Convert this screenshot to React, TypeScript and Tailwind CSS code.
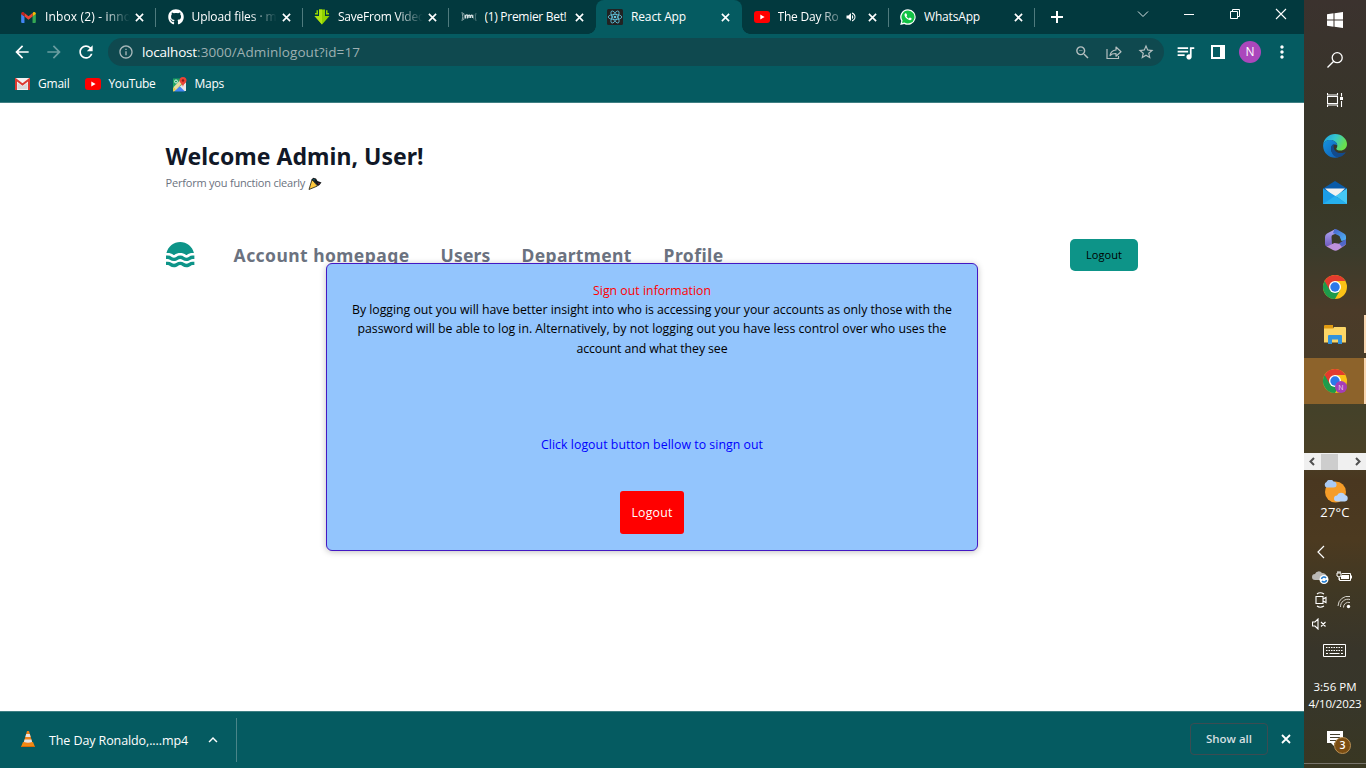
import { useLayoutEffect, useRef, useState, type ReactNode } from "react";
import { FaGithub } from "react-icons/fa";
import { MdQueueMusic, MdArrowBack, MdArrowForward, MdRefresh, MdStarBorder, MdZoomOut, MdInfoOutline, MdMoreVert, MdAdd, MdVolumeUp, MdKeyboardArrowUp } from "react-icons/md";

/* Single line of text whose tracking is adjusted so that it spans `w` pixels. */
function Line({ w, className = "", children }: { w: number; className?: string; children: ReactNode }) {
  const ref = useRef<HTMLSpanElement>(null);
  const [spacing, setSpacing] = useState(0);
  useLayoutEffect(() => {
    const el = ref.current;
    if (!el) return;
    const count = (el.textContent || "").length;
    setSpacing((w - el.getBoundingClientRect().width) / Math.max(count, 1));
  }, [w]);
  return (
    <span ref={ref} className={`inline-block whitespace-pre ${className}`} style={{ letterSpacing: spacing }}>
      {children}
    </span>
  );
}

function Cross({ className }: { className: string }) {
  return (
    <svg viewBox="0 0 10 10" className={`shrink-0 ${className}`} fill="none" stroke="#fff" strokeWidth="1.800">
      <path d="M1 1l8 8M9 1L1 9" />
    </svg>
  );
}

function GmailNew() {
  return (
    <svg viewBox="0 0 16 12" className="h-[11px] w-[15px]">
      <path d="M0 2v9a1 1 0 0 0 1 1h2.6V5L0 2z" fill="#4285f4" />
      <path d="M12.4 12H15a1 1 0 0 0 1-1V2l-3.6 3z" fill="#34a853" />
      <path d="M12.4 1.3V5L16 2.3V1.6C16 .2 14.300-.5 13.200.4z" fill="#fbbc04" />
      <path d="M3.600 5V1.200L8 4.500l4.400-3.300V5L8 8.400z" fill="#ea4335" />
      <path d="M0 1.600v.8L3.600 5V1.200L2.800.4C1.700-.5 0 .2 0 1.600z" fill="#c5221f" />
    </svg>
  );
}

function YouTube() {
  return (
    <svg viewBox="0 0 16 12" className="h-[12px] w-[16px]">
      <rect width="16" height="12" rx="3" fill="#f00" />
      <path d="M6.300 3.500v5L10.600 6z" fill="#fff" />
    </svg>
  );
}

function ReactIcon() {
  return (
    <svg viewBox="0 0 16 16" className="h-4 w-4">
      <rect width="16" height="16" rx="1.500" fill="#222" />
      <g fill="none" stroke="#61c5de" strokeWidth=".8">
        <ellipse cx="8" cy="8" rx="6.800" ry="2.600" />
        <ellipse cx="8" cy="8" rx="6.800" ry="2.600" transform="rotate(60 8 8)" />
        <ellipse cx="8" cy="8" rx="6.800" ry="2.600" transform="rotate(120 8 8)" />
      </g>
      <circle cx="8" cy="8" r="1.300" fill="#61c5de" />
    </svg>
  );
}

function SaveFrom() {
  return (
    <svg viewBox="0 0 16 16" className="h-4 w-4">
      <path d="M5 .5h6V7h4.500L8 15.500.5 7H5z" fill="#8fd100" />
      <path d="M5 .5h3v15L.5 7H5z" fill="#aee312" />
      <path d="M1 4h3v1.500H1zM12 4h3v1.500h-3zM2.500 1.200h1.500V4H2.500zM12 1.200h1.500V4H12z" fill="#8fd100" />
    </svg>
  );
}

function Premier() {
  return (
    <svg viewBox="0 0 16 12" className="h-3 w-4" fill="none" stroke="#d5e0e1" strokeWidth=".9">
      <path d="M1 1q1.500 5 0 9M2.500 2q2 3 0 7" opacity=".7" />
      <path d="M4.500 7.500V4.500q2-1.500 2 .5v2.500M7 7V5q1.500-1.500 2 0v2M9.500 7V5q1.500-1.500 2 0v2" strokeWidth="1.300" />
      <path d="M13 3.500q-1.500 2 0 5M15 2q-1.500 4 0 8" opacity=".4" />
    </svg>
  );
}

function WhatsAppIcon() {
  return (
    <svg viewBox="0 0 16 16" className="h-4 w-4">
      <path d="M8 .2A7.800 7.800 0 0 0 1.300 12L.2 15.900l4-1A7.800 7.800 0 1 0 8 .2z" fill="#fff" />
      <path d="M8 1.500A6.500 6.500 0 0 0 2.600 11.600L2 14l2.400-.6A6.500 6.500 0 1 0 8 1.500z" fill="#12c245" />
      <path d="M5.400 4.300c-1.700 1.100-.6 3.500 1 5s3.900 2.600 5 1.300c.7-1 .2-1.300-1.400-2-.6-.2-.8 1-1.300.9C7.800 9.100 6.700 8 6.500 7.200c0-.4.8-.6.5-1.300-.4-1-.6-1.800-1.600-1.600z" fill="#fff" />
    </svg>
  );
}

const FADE = "[mask-image:linear-gradient(to_right,black_68%,transparent_100%)]";

const TABS: { icon: ReactNode; title: string; w: number; fade?: boolean; active?: boolean; sound?: boolean; sep?: boolean }[] = [
  { icon: <GmailNew />, title: "Inbox (2) - inno", w: 86, fade: true, sep: true },
  { icon: <FaGithub size={16} color="#fff" />, title: "Upload files · m", w: 85, fade: true, sep: true },
  { icon: <SaveFrom />, title: "SaveFrom Video", w: 87, fade: true, sep: true },
  { icon: <Premier />, title: "(1) Premier Bet!", w: 82 },
  { icon: <ReactIcon />, title: "React App", w: 55, active: true },
  { icon: <YouTube />, title: "The Day Ro", w: 61, fade: true, sound: true, sep: true },
  { icon: <WhatsAppIcon />, title: "WhatsApp", w: 56, sep: true },
];

function TabStrip() {
  return (
    <div className="flex h-[34px] bg-[#02393e] pl-[9.500px]">
      {TABS.map((t) => (
        <div
          key={t.title}
          className={`relative flex h-[34px] w-[146.500px] shrink-0 items-center pl-[11.500px] ${t.active ? "rounded-t-[8px] bg-[#055b61]" : ""}`}
        >
          {t.active && (
            <>
              <span className="absolute bottom-0 -left-[8px] size-[8px] bg-[radial-gradient(circle_at_0_0,transparent_7.500px,#055b61_8px)]" />
              <span className="absolute -right-[8px] bottom-0 size-[8px] bg-[radial-gradient(circle_at_100%_0,transparent_7.500px,#055b61_8px)]" />
            </>
          )}
          <span className="flex w-[24px] shrink-0 items-center">{t.icon}</span>
          <span className={`w-[85px] shrink-0 overflow-hidden text-[12px] leading-[18px] text-white ${t.fade && !t.sound ? FADE : ""}`}>
            <span className={t.sound ? "inline-block [mask-image:linear-gradient(to_right,black_66%,transparent_115%)]" : ""}>
              <Line w={t.w}>{t.title}</Line>
            </span>
          </span>
          {t.sound && <MdVolumeUp size={12} color="#fff" className="absolute left-[103px]" />}
          <Cross className="ml-[5px] size-[9px]" />
          {t.sep && <span className="absolute top-[8px] right-0 h-[19px] w-px bg-[#4f7b7e]" />}
        </div>
      ))}
      <svg viewBox="0 0 12 12" className="mt-[11px] ml-[16px] size-[12px]" stroke="#fff" strokeWidth="2"><path d="M0 6h12M6 0v12" /></svg>
      <div className="ml-auto flex h-[28px] items-center">
        <svg viewBox="0 0 46 28" className="h-[28px] w-[46px]" fill="none" stroke="#dbe5e6" strokeWidth="1"><path d="M18 11.500l5 5 5-5" /></svg>
        <svg viewBox="0 0 46 28" className="h-[28px] w-[46px]" stroke="#fff"><path d="M18 14.500h10" /></svg>
        <svg viewBox="0 0 46 28" className="h-[28px] w-[46px]" fill="none" stroke="#fff"><path d="M18.500 11.500h7v7h-7zM20.500 11.500v-2h7v7h-2" /></svg>
        <svg viewBox="0 0 46 28" className="h-[28px] w-[46px]" stroke="#fff" strokeWidth="1.100"><path d="M18 9l10 10M28 9L18 19" /></svg>
      </div>
    </div>
  );
}

function Toolbar() {
  return (
    <div className="flex h-[36px] items-center pl-[12px]">
      <MdArrowBack size={20} color="#fff" />
      <MdArrowForward size={20} color="#6a9da0" className="ml-[12px]" />
      <MdRefresh size={20} color="#fff" className="ml-[12px]" />
      <div className="ml-[12px] flex h-[28px] w-[1056px] items-center rounded-full bg-[#0f494f] pl-[10px]">
        <MdInfoOutline size={16} color="#a9b9bb" />
        <span className="ml-[8px] flex text-[13.500px] leading-[20px]">
          <Line w={55} className="text-white">localhost</Line>
          <Line w={163} className="text-[#9db0b2]">:3000/Adminlogout?id=17</Line>
        </span>
        <MdZoomOut size={17} color="#b4bfc0" className="ml-auto" />
        <svg viewBox="0 0 16 16" className="ml-[15px] size-[16px]" fill="none" stroke="#b4bfc0" strokeWidth="1.200">
          <path d="M1 5v9.500h11.500V12" />
          <path d="M4 11.500c.6-3.500 2.500-5.300 6-5.500V3l5 4.700-5 4.500V9.500c-3-.1-4.700.5-6 2z" strokeLinejoin="round" />
        </svg>
        <MdStarBorder size={18} color="#b4bfc0" className="mr-[9px] ml-[15px]" />
      </div>
      <MdQueueMusic size={21} color="#fff" className="ml-[11px]" />
      <svg viewBox="0 0 14 14" className="ml-[15px] size-[14px]"><path d="M0 0h14v14H0zM2 2v10h7V2z" fill="#fff" fillRule="evenodd" /></svg>
      <span className="ml-[14px] flex size-[22px] items-center justify-center rounded-full bg-[#ab47bc] text-[12px] leading-none text-white">N</span>
      <MdMoreVert size={20} color="#fff" className="ml-[11px]" />
    </div>
  );
}

function Bookmarks() {
  return (
    <div className="flex h-[33px] items-center border-b border-[#3f7f83] pb-[4px] pl-[15px] text-[12px] leading-[16px] text-white">
      <svg viewBox="0 0 15 12" className="mr-[8px] h-[12px] w-[15px]">
        <rect width="15" height="12" rx="1" fill="#f2f2f2" />
        <path d="M2.500 11V5l5 3.500 5-3.500v6" fill="#d8d8d8" />
        <path d="M1 12V1.500l6.500 5L14 1.500V12" fill="none" stroke="#dc3a30" strokeWidth="2" />
      </svg>
      <Line w={31.500}>Gmail</Line>
      <span className="mr-[8px] ml-[15px]"><YouTube /></span>
      <Line w={47}>YouTube</Line>
      <svg viewBox="0 0 15 15" className="mr-[8px] ml-[16px] size-[15px]">
        <path d="M1 1.500h9L1 13z" fill="#1ea362" />
        <path d="M1 14L14 5v9z" fill="#e8e8e8" />
        <path d="M2 14.500l5.500-5.500 5.500 5.500z" fill="#4285f4" />
        <path d="M1 11L10 1.500l3 3L2 14.500H1z" fill="#fbd04b" opacity=".9" />
        <path d="M1.500 10L9 2v5l-5 5.500z" fill="#eceff1" opacity=".5" />
        <circle cx="4" cy="4.500" r="1.500" fill="none" stroke="#fff" strokeWidth=".8" />
        <path d="M11 0a3.500 3.500 0 0 1 3.500 3.500C14.500 6 11.500 6.500 11 10c-.5-3.500-3.500-4-3.500-6.500A3.500 3.500 0 0 1 11 0z" fill="#ea4335" />
        <circle cx="11" cy="3.500" r="1.200" fill="#8c1d16" />
      </svg>
      <Line w={29.500}>Maps</Line>
    </div>
  );
}

function Logo() {
  const wave =
    "M23.62 16.6547C24.236 16.175 24.9995 15.924 25.78 15.9447H27.39V12.7347H25.78C24.4052 12.7181 23.0619 13.146 21.95 13.9547C21.3243 14.416 20.5674 14.6649 19.79 14.6649C19.0126 14.6649 18.2557 14.416 17.63 13.9547C16.4899 13.1611 15.1341 12.7356 13.745 12.7356C12.3559 12.7356 11.0001 13.1611 9.86 13.9547C9.2343 14.416 8.4774 14.6649 7.7 14.6649C6.9226 14.6649 6.1657 14.416 5.54 13.9547C4.4144 13.1356 3.0518 12.7072 1.66 12.7347H0V15.9447H1.61C2.39051 15.924 3.154 16.175 3.77 16.6547C4.908 17.4489 6.2623 17.8747 7.65 17.8747C9.0377 17.8747 10.392 17.4489 11.53 16.6547C12.1468 16.1765 12.9097 15.9257 13.69 15.9447C14.4708 15.9223 15.2348 16.1735 15.85 16.6547C16.9901 17.4484 18.3459 17.8738 19.735 17.8738C21.1241 17.8738 22.4799 17.4484 23.62 16.6547Z";
  return (
    <svg viewBox="0 0 28 24" preserveAspectRatio="none" className="h-[25.600px] w-[29px]" fill="#0d9488">
      <path d="M0.41 10.3847C1.14777 7.4194 2.85643 4.7861 5.2639 2.90424C7.6714 1.02234 10.6393 0 13.695 0C16.7507 0 19.7186 1.02234 22.1261 2.90424C24.5336 4.7861 26.2422 7.4194 26.98 10.3847H25.78C23.7557 10.3549 21.7729 10.9599 20.11 12.1147C20.014 12.1842 19.9138 12.2477 19.81 12.3047H19.67C19.5662 12.2477 19.466 12.1842 19.37 12.1147C17.6924 10.9866 15.7166 10.3841 13.695 10.3841C11.6734 10.3841 9.6976 10.9866 8.02 12.1147C7.924 12.1842 7.8238 12.2477 7.72 12.3047H7.58C7.4762 12.2477 7.376 12.1842 7.28 12.1147C5.6171 10.9599 3.6343 10.3549 1.61 10.3847H0.41Z" />
      <path d={wave} />
      <path d={wave} transform="translate(0 5.740)" />
    </svg>
  );
}

function PageContent() {
  return (
    <main className="relative h-[608px] bg-white pt-[38px] pl-[165.600px]">
      <h1 className="h-[31px] text-[23px] leading-[30px] font-bold text-[#111827] [font-family:'Noto_Sans',sans-serif]"><Line w={258}>Welcome Admin, User!</Line></h1>
      <p className="flex h-[22px] items-center text-[11px] text-[#6b7280]">
        <Line w={139.500}>Perform you function clearly</Line>
        <svg viewBox="0 0 14 13" className="ml-[3px] h-[13px] w-[14px]">
          <path d="M4 2.500L9.500 9 1 12.500z" fill="#ffc83d" stroke="#1c1a12" strokeWidth=".8" strokeLinejoin="round" />
          <path d="M3.500 3L5 .8 8 1.500l1.500 2.500 4 1.500-2 2.500-1.500 1C8.500 7.500 6.500 4.500 3.500 3z" fill="#17191c" />
          <path d="M5 2l2 .500-1 1.500z" fill="#0f6f80" />
          <path d="M10 6l2 .3-1.500 1.200z" fill="#8a1d35" />
        </svg>
      </p>
      <nav className="mt-[45px] flex h-[32px] items-center text-[17.500px] leading-[26px] font-bold text-[#6b7280] [font-family:'Noto_Sans',sans-serif]">
        <Logo />
        <Line w={176} className="ml-[39px]">Account homepage</Line>
        <Line w={50} className="ml-[31px]">Users</Line>
        <Line w={110} className="ml-[31px]">Department</Line>
        <Line w={60} className="ml-[32px]">Profile</Line>
        <button className="mr-[166px] ml-auto h-[32px] w-[68px] rounded-[5px] bg-[#0d9488] text-[11px] [font-family:'Open_Sans',sans-serif] font-medium text-black"><Line w={36}>Logout</Line></button>
      </nav>
      <section className="absolute top-[160px] left-[326px] flex h-[288px] w-[652px] flex-col items-center rounded-[6px] border border-[#4318c4] bg-[#93c5fd] pt-[16.500px] text-[12.300px] leading-[19.400px] text-black shadow-[0_1px_6px_rgba(0,0,0,0.250)]">
        <Line w={118} className="text-[#ff0000]">Sign out information</Line>
        <Line w={600}>By logging out you will have better insight into who is accessing your your accounts as only those with the</Line>
        <Line w={589}>password will be able to log in. Alternatively, by not logging out you have less control over who uses the</Line>
        <Line w={151}>account and what they see</Line>
        <Line w={222} className="mt-[76.500px] text-[#0000ff]">Click logout button bellow to singn out</Line>
        <button className="mt-[36.500px] h-[43px] w-[64px] rounded-[3px] bg-[#ff0000] pt-[2px] text-white"><Line w={41}>Logout</Line></button>
      </section>
    </main>
  );
}

function Downloads() {
  return (
    <footer className="flex h-[57px] items-center border-t border-[#3f7f83] bg-[#055b61] pl-[21px] text-[12.500px] text-white">
      <svg viewBox="0 0 14 16" className="mb-[2px] h-[16px] w-[14px]">
        <path d="M2 11h10l2 5H0z" fill="#f28a12" />
        <path d="M6 0h2l3.500 12q-4.500 2.500-9 0z" fill="#f0821a" />
        <path d="M5.200 3h3.600l.8 3H4.400zM3.600 8.500h6.800l.7 2.500q-4 1.500-8.200 0z" fill="#e5e5e5" />
        <path d="M0 15h14v1H0z" fill="#d96a08" />
      </svg>
      <Line w={139} className="mt-[2px] ml-[14px]">The Day Ronaldo,....mp4</Line>
      <MdKeyboardArrowUp size={18} color="#fff" className="ml-[16px]" />
      <span className="ml-[14px] h-[44px] w-px bg-[#4a8589]" />
      <button className="mb-[2px] ml-auto h-[32px] w-[78px] rounded-[4px] border border-[#3b4c52] text-[11.500px] font-semibold text-[#d5dfe0]"><Line w={46}>Show all</Line></button>
      <Cross className="mr-[13px] mb-[2px] ml-[13px] size-[10px]" />
    </footer>
  );
}

function Chrome({ badge = false }: { badge?: boolean }) {
  return (
    <svg viewBox="0 0 24 24" className="mb-px size-[24px] overflow-visible">
      <circle cx="12" cy="12" r="12" fill="#fbc116" />
      <path d="M12 12L1.600 6A12 12 0 0 0 12 24l5.200-9z" fill="#1e9b4c" />
      <path d="M1.600 6A12 12 0 0 1 22.400 6H12L6.800 15z" fill="#e33b2e" />
      <circle cx="12" cy="12" r="6" fill="#fff" />
      <circle cx="12" cy="12" r="4.700" fill="#2b78e9" />
      {badge && (
        <>
          <circle cx="18" cy="18" r="6" fill="#a53db7" />
          <text x="18" y="20.600" textAnchor="middle" fontSize="7" fill="#f0d7f4">N</text>
        </>
      )}
    </svg>
  );
}

function TaskIcon({ children, className = "h-[47px]" }: { children: ReactNode; className?: string }) {
  return <div className={`flex w-full shrink-0 items-center justify-center ${className}`}>{children}</div>;
}

function Taskbar() {
  return (
    <aside className="flex h-[768px] w-[62px] flex-col overflow-hidden bg-[linear-gradient(to_bottom,#3b322e_0px,#38352a_110px,#393827_200px,#3b3b2b_250px,#4b3b29_310px,#493c28_360px,#444129_410px,#4a4127_450px,#493720_480px,#4c3a20_540px,#403824_590px,#38352a_650px,#37362a_700px,#393722_768px)] text-white">
      <TaskIcon className="h-[40px]">
        <svg viewBox="0 0 16 16" className="size-[16px]" fill="#fff"><path d="M0 2.300L6.500 1.300v6.200H0zM7.500 1.200L16 0v7.500H7.500zM0 8.500h6.500v6.200L0 13.700zM7.500 8.500H16V16l-8.500-1.200z" /></svg>
      </TaskIcon>
      <TaskIcon className="h-[40px]">
        <svg viewBox="0 0 16 16" className="size-[16px]" fill="none" stroke="#fff" strokeWidth="1.300"><circle cx="10.200" cy="5.700" r="5" /><path d="M6.700 9.300L.5 15.500" /></svg>
      </TaskIcon>
      <TaskIcon className="h-[40px]">
        <svg viewBox="0 0 16 16" className="size-[16px]" fill="none" stroke="#fff" strokeWidth="1.100"><path d="M.5 4.500h10v7H.5zM.5 1v2h10V1M.5 15v-2h10v2M14.500 1v3.500M14.500 9v6" /><path d="M13 5h3v3h-3z" fill="#fff" stroke="none" /></svg>
      </TaskIcon>
      <TaskIcon className="mt-[2px] h-[48px]">
        <svg viewBox="0 0 24 24" className="size-[24px]">
          <defs>
            <linearGradient id="edgeTop" x1="0" x2="1" y1="0" y2=".4"><stop offset="0" stopColor="#1a9de0" /><stop offset=".5" stopColor="#34c6d2" /><stop offset="1" stopColor="#69e04d" /></linearGradient>
            <linearGradient id="edgeLow" x1="0" x2="1" y1="0" y2="1"><stop offset="0" stopColor="#1593de" /><stop offset="1" stopColor="#0f5cb5" /></linearGradient>
          </defs>
          <path d="M.2 10.500C1 4.300 6 0 12 0c7 0 12 5 12 10 0 4-3 6.500-6.500 6.500-2.500 0-4.200-.9-4.200-1.800 0-.6 1-1.100 1-3C14.300 8.500 11 6 7.200 6 3.500 6 1 8 .2 10.500z" fill="url(#edgeTop)" />
          <path d="M.1 12C0 8 3.500 6 7.200 6c4 0 7 2.600 7.100 5.500C12.500 9.500 8 10 8 14.500c0 5 4.500 8.500 9 8C10 26 .5 21.500.1 12z" fill="url(#edgeLow)" />
          <path d="M8 14.500c0-2.500 1.200-4 3-4.600-1.500 4.600 1.500 9.100 6.500 9.100 2.500 0 4.500-1 5-.8.600.300-3 5-7.500 5-4 0-7-4-7-8.700z" fill="#134a8c" />
        </svg>
      </TaskIcon>
      <TaskIcon>
        <svg viewBox="0 0 24 23" className="mb-[2px] h-[23px] w-[24px]">
          <path d="M0 7.500L12 0l12 7.500V12H0z" fill="#0a5ba8" />
          <path d="M2 7.500h20L12 17z" fill="#f2f2f0" />
          <path d="M0 7.500L24 22v1H0z" fill="#1b9de8" />
          <path d="M24 7.500V23L12.500 15z" fill="#45c8f4" />
          <path d="M0 23l12-8 12 8z" fill="#26b0ee" />
        </svg>
      </TaskIcon>
      <TaskIcon>
        <svg viewBox="0 0 21 22" className="mb-[2px] h-[22px] w-[21px]">
          <defs>
            <linearGradient id="m1" x1="0" x2="0" y1="0" y2="1"><stop offset="0" stopColor="#b4aaf4" /><stop offset="1" stopColor="#6d59bd" /></linearGradient>
            <linearGradient id="m2" x1="0" x2="1" y1="0" y2="1"><stop offset="0" stopColor="#4b61cb" /><stop offset="1" stopColor="#4cb6f6" /></linearGradient>
          </defs>
          <path d="M10.500 0L2 4.500Q0 5.500 0 8v7q0 1.500 1.500 2.500L7 15.500 6.500 8q0-1.500 1-2L10 5z" fill="url(#m1)" />
          <path d="M9.500 0q2 0 3.500 1l6 3.500q2 1 2 3V11l-4.500 1L15 8.500q0-1.500-1.500-2L8 4z" fill="url(#m2)" />
          <path d="M1.500 17.500l8-3.500 6 1 5.500-4v3q0 2-2 3l-6 4q-2.500 1.500-5 0z" fill="#bd91dc" />
          <path d="M14 14.500l7-4.500v5l-4 3z" fill="#5067c8" />
        </svg>
      </TaskIcon>
      <TaskIcon><Chrome /></TaskIcon>
      <TaskIcon className="relative h-[47px]">
        <svg viewBox="0 0 22 19" className="h-[19px] w-[22px]">
          <path d="M0 1q0-1 1-1h8v4H0z" fill="#e09a12" />
          <path d="M0 3.500h9L10 2h11q1 0 1 1v14.500H0z" fill="#fbd667" />
          <path d="M4 19v-8q0-1 1-1h12q1 0 1 1v8h-4v-4.500H8V19z" fill="#3092dd" />
        </svg>
        <span className="absolute top-[4px] right-0 h-[38px] w-[2px] bg-[#f9d7b2]" />
      </TaskIcon>
      <TaskIcon className="relative h-[46px] bg-[#8d632b]">
        <Chrome badge />
        <span className="absolute top-0 right-0 h-[46px] w-[2px] bg-[#f9d7b2]" />
      </TaskIcon>
      <div className="mt-[49px] flex h-[17px] shrink-0 items-center bg-[#f0f0f0]">
        <svg viewBox="0 0 17 17" className="size-[17px]" fill="none" stroke="#505050" strokeWidth="2"><path d="M10 5L6.500 8.500 10 12" /></svg>
        <span className="h-[16px] w-[17px] bg-[#cdcdcd]" />
        <svg viewBox="0 0 17 17" className="ml-auto size-[17px]" fill="none" stroke="#505050" strokeWidth="2"><path d="M7 5l3.500 3.500L7 12" /></svg>
      </div>
      <div className="flex h-[64px] shrink-0 flex-col items-center pt-[10px]">
        <svg viewBox="0 0 25 23" className="h-[23px] w-[25px] shrink-0">
          <circle cx="12.500" cy="12" r="10.500" fill="#f59c28" />
          <path d="M3.500 7.500A3 3 0 0 1 3.500 2a4 4 0 0 1 7-.5 3 3 0 0 1 3 3.500q0 2.500-3 2.500z" fill="#a9caf5" />
          <path d="M14 21.500a3 3 0 0 1 0-6 4.500 4.500 0 0 1 8-.5 3.300 3.300 0 0 1 0 6.500z" fill="#b6d3f8" />
        </svg>
        <Line w={29.500} className="text-[13px] leading-[18px]">27°C</Line>
      </div>
      <div className="grid h-[102px] shrink-0 grid-cols-2 grid-rows-[36px_24px_24px_18px] place-items-center pr-[10px] pl-[3px]">
        <svg viewBox="0 0 14 14" className="col-span-2 mr-[22px] size-[14px]" fill="none" stroke="#fff" strokeWidth="1.200"><path d="M10 1L4 7l6 6" /></svg>
        <svg viewBox="0 0 17 14" className="mt-[-10px] ml-[2px] h-[14px] w-[17px]">
          <path d="M3 10a3 3 0 0 1 0-6 4 4 0 0 1 7-1q4 0 5 4v3z" fill="#bab8b5" />
          <circle cx="12" cy="9.500" r="4.500" fill="#fff" /><path d="M9.500 9a2.500 2.500 0 0 1 4.500-1M14.500 10a2.500 2.500 0 0 1-4.500 1" fill="none" stroke="#1b78ce" strokeWidth="1.500" />
        </svg>
        <svg viewBox="0 0 16 12" className="mt-[-13px] h-[12px] w-[16px]" fill="none" stroke="#fff" strokeWidth="1"><path d="M6 3.500h8.500v7H3.500V8M15.500 5.500v3M1 3h4v3q-2 2-4 0zM2 3V1M4 3V1M3 7v3" /><path d="M6 5h7v4H5V6z" fill="#fff" stroke="none" /></svg>
        <svg viewBox="0 0 14 16" className="mt-[-12px] ml-[4px] h-[16px] w-[14px]" fill="none" stroke="#fff" strokeWidth="1.100"><path d="M2 4.500h7v7H2zM9 7l3-1.500v5L9 9M3 2q3-2.500 7 0M3 14q3 2.500 7 0" /></svg>
        <svg viewBox="0 0 14 14" className="mt-[-9px] size-[14px]" fill="none" stroke="#d6d3cc" strokeWidth="1"><path d="M1 11A10 10 0 0 1 13 1.500M3.500 12A7.500 7.500 0 0 1 13 4.500M6.500 12.500A5 5 0 0 1 13 7.500" /><circle cx="11.500" cy="11.500" r="1.700" fill="#fff" stroke="none" /></svg>
        <svg viewBox="0 0 15 12" className="mt-[-6px] ml-[1px] h-[12px] w-[15px]" fill="none" stroke="#fff" strokeWidth="1.100"><path d="M.5 4H3l3-3v10L3 8H.5zM9 4l4.500 4.500M13.500 4L9 8.500" /></svg>
      </div>
      <TaskIcon className="h-[28px]">
        <svg viewBox="0 0 23 13" className="mr-px h-[13px] w-[23px]" fill="none" stroke="#fff"><path d="M.5.500h22v12H.5z" /><path d="M3 3.500h17M3 6.500h17" strokeDasharray="1.500 1" /><path d="M3 9.500h2M6.500 9.500h10M18 9.500h2" /></svg>
      </TaskIcon>
      <div className="mt-[14px] flex h-[35px] shrink-0 flex-col items-center text-[11.500px] leading-[17px]">
        <Line w={43}>3:56 PM</Line>
        <Line w={53}>4/10/2023</Line>
      </div>
      <div className="relative mt-[14px] h-[37px] shrink-0 border-b border-[#77746b]">
        <svg viewBox="0 0 16 15" className="mt-[4px] ml-[23px] h-[15px] w-[16px]"><path d="M0 0h16v12H7v3l-3-3H0z" fill="#fff" /><path d="M3 3.500h10M3 6.500h10M3 9.500h7" stroke="#45402f" /></svg>
        <span className="absolute top-[10px] left-[30px] flex size-[17px] items-center justify-center rounded-full border border-[#b99055] bg-[#7b4d12] text-[10.500px] leading-none font-semibold">3</span>
      </div>
    </aside>
  );
}

export default function App() {
  return (
    <div className="flex h-[768px] w-[1366px] overflow-hidden [font-family:'Open_Sans','Noto_Sans',sans-serif]">
      <div className="flex w-[1304px] shrink-0 flex-col">
        <header className="h-[103px] bg-[#055b61]">
          <TabStrip />
          <Toolbar />
          <Bookmarks />
        </header>
        <PageContent />
        <Downloads />
      </div>
      <Taskbar />
    </div>
  );
}
